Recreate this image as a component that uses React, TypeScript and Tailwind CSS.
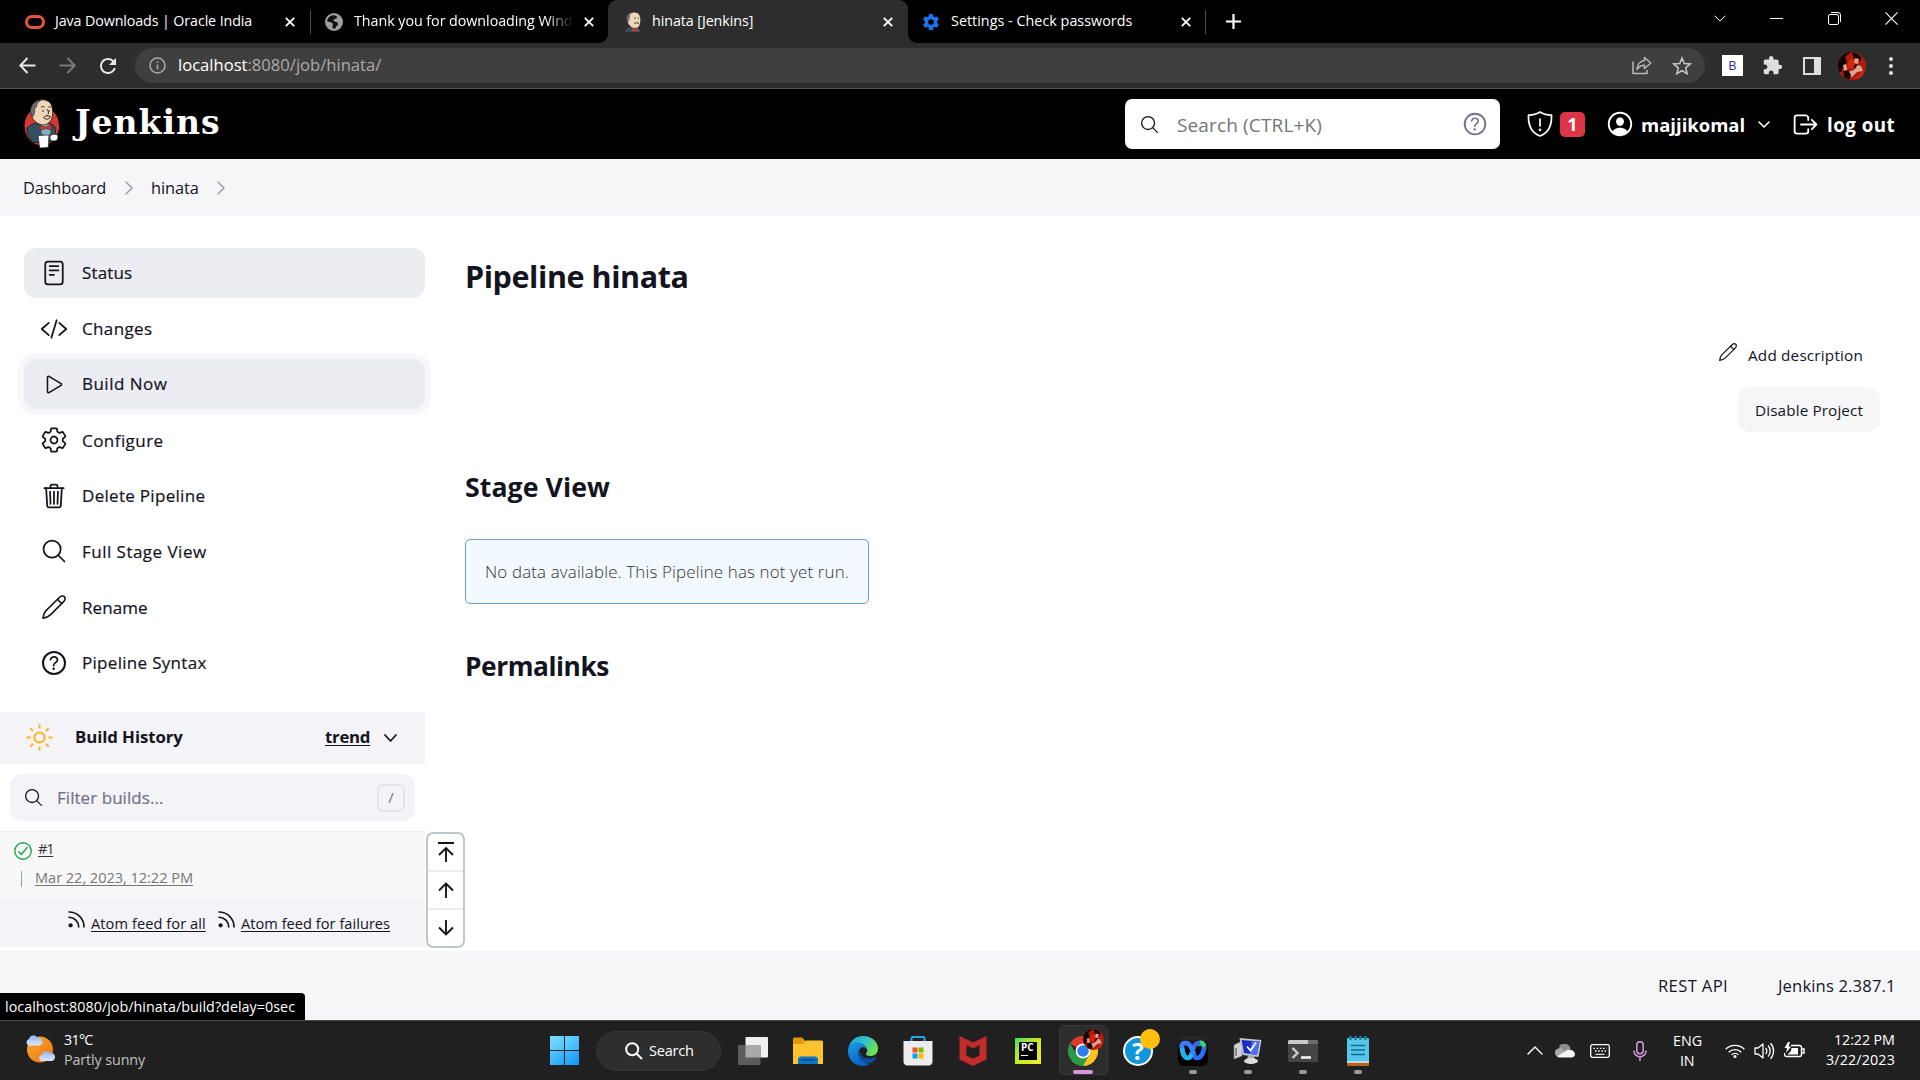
import React from "react";
import {
  IoReaderOutline, IoCodeSlashOutline, IoPlayOutline, IoSettingsOutline, IoTrashOutline, IoSearchOutline,
  IoHelpCircleOutline, IoPersonCircleOutline, IoLogOutOutline, IoCheckmarkCircleOutline, IoSettingsSharp,
} from "react-icons/io5";
import { MdExtension, MdRefresh } from "react-icons/md";

type TextProps = { className?: string; children: React.ReactNode };

function T({ className = "", children }: TextProps) {
  return <div className={`shrink-0 whitespace-nowrap ${className}`}>{children}</div>;
}

function Close() {
  return (
    <svg width="10" height="10" viewBox="0 0 10 10" className="shrink-0" stroke="#fff" strokeWidth="1.9">
      <path d="M.8.8l8.4 8.4M9.2.8L.8 9.2" />
    </svg>
  );
}

function Chevron({ className = "", d = "M1 1l5 5 5-5", w = 12, h = 7, sw = 1.6 }: { className?: string; d?: string; w?: number; h?: number; sw?: number }) {
  return (
    <svg width={w} height={h} viewBox={`0 0 ${w} ${h}`} className={`shrink-0 overflow-visible ${className}`} fill="none" stroke="currentColor" strokeWidth={sw} strokeLinecap="round" strokeLinejoin="round">
      <path d={d} />
    </svg>
  );
}

function Pencil({ className = "" }: { className?: string }) {
  return (
    <svg viewBox="0 0 24 24" className={`shrink-0 ${className}`} fill="none" stroke="currentColor" strokeWidth="1.6" strokeLinejoin="round" strokeLinecap="round">
      <path d="M.9 23.1C1.3 19.7 2 17.6 4 15.6L17.6 2.3C18.9 1 21.2.7 22.4 1.7 23.6 2.9 23.2 5.1 21.9 6.4L8.4 19.9C6.4 21.9 4.3 22.7.9 23.1Z" />
      <path d="M15.8 4.1C16.6 6.2 17.9 7.5 20 8.2" />
    </svg>
  );
}

function Rss({ className = "" }: { className?: string }) {
  return (
    <svg width="17" height="17" viewBox="0 0 17 17" className={`shrink-0 ${className}`} fill="none" stroke="currentColor" strokeWidth="1.6" strokeLinecap="round">
      <path d="M1 1C9.5 1 16 7.5 16 16M1 6.3C6.5 6.3 10.7 10.5 10.7 16" />
      <circle cx="2.6" cy="14.3" r="2.1" fill="currentColor" stroke="none" />
    </svg>
  );
}

function Butler() {
  return (
    <svg width="36" height="50" viewBox="0 0 36 50" className="shrink-0">
      <ellipse cx="17.8" cy="27" rx="17.3" ry="19.5" fill="#d33833" />
      <path d="M3 29c3-3 7-4.500 10-5.500l13 1c3 1 4.500 2 5 4l1 9-2 4-7 2H9c-4-4-6-8-6-14.500Z" fill="#335061" stroke="#111b22" strokeWidth=".8" />
      <path d="M16 26l10-1 .5 9-4 5-5-5Z" fill="#81b0c4" />
      <path d="M8.500 19C6 14 6.500 5.500 12 2.500 17 -.5 25 .5 27.500 6c1.300 4 1.300 8 .8 11.500-.8 4.500-3.800 7.500-8.300 8.500-4 0-9-2.500-11.500-7Z" fill="#f0d6b7" stroke="#111" strokeWidth=".7" />
      <path d="M7.500 17C5 11 7.500 3.500 14 1.500l3-.3c-3 1.800-4.500 4-4.500 7-2 .5-2.200 2-1.500 4l-1.500 5Z" fill="#6d6b6d" stroke="#231f20" strokeWidth=".5" />
      <path d="M17 8.500c1-1.300 2.500-1.300 3.500-.2M24.300 8.300c.8-1 1.800-1 2.600 0M18 12h2M24.500 12h1.500M23 10c1.300 2 2.300 4 .8 5.200M19.500 18.500c2-2 5-2.500 7-.8-1 2.800-5 3.300-7 .8Z" fill="none" stroke="#222" strokeWidth="1" />
      <path d="M16 26l5.500 2.300L27 25l.5 6-5.500-1.500-5.500 2Z" fill="#d33833" stroke="#5a1010" strokeWidth=".6" />
      <path d="M14 36.500l11-.5-.8 12.500-8.500.5Z" fill="#fff" stroke="#222" strokeWidth=".7" />
      <path d="M27 36c3-1.500 7-1 7 2s-2 4.500-5 4-4-4-2-6Z" fill="#fff" stroke="#222" strokeWidth=".8" />
    </svg>
  );
}

function Avatar({ className = "" }: { className?: string }) {
  return (
    <svg viewBox="0 0 28 28" className={`shrink-0 rounded-full ${className}`}>
      <rect width="28" height="28" fill="#b3190c" />
      <path d="M0 0h13L7 5l2 5-4 6-2 4H0Z" fill="#120404" />
      <path d="M14 0c6 1 10 4 9 8l-4 3-3-3Z" fill="#1d0605" />
      <path d="M10 9l5-3 3 4-4 7-4-2Z" fill="#d8260f" />
      <path d="M5 13l3-1 2 8 6-2 3-5 4 1 2 5-6 1-5 5-7-1Z" fill="#dba593" />
      <path d="M17 6l4 1-1 5-4-1Z" fill="#dba593" />
      <path d="M5 19l5-1 3 5-2 5-5-3ZM16 13l4-1-3 5Z" fill="#1b0606" />
      <path d="M16 27l9-8 3 9Z" fill="#d8260f" />
    </svg>
  );
}

function Tabs() {
  return (
    <div className="flex h-[43px] shrink-0 items-center bg-black text-[14.300px] text-white">
      <div className="flex h-full w-[310px] shrink-0 items-center pl-[25px]">
        <div className="h-[14px] w-5 rounded-[7px] border-[3px] border-[#e5533d]" />
        <T className="ml-[10px] w-[197px] pb-[2px] tracking-[-0.120px]">Java Downloads | Oracle India</T>
        <div className="ml-[33px]"><Close /></div>
      </div>
      <div className="h-6 w-px bg-[#4d4d4d]" />
      <div className="flex h-full w-[297px] shrink-0 items-center pl-[14px]">
        <svg width="18" height="18" viewBox="0 0 18 18" className="shrink-0">
          <circle cx="9" cy="9" r="9" fill="#9aa0a6" />
          <path d="M8 2.200c3 0 4 1 4 2.200 0 1.600-3.500 1-3.500 3 0 1.500 4.500.8 4.500 3.400 0 2-2 2-2.500 4.500-2 .9-3 .2-3-1.300 0-2 1-3-.5-4.200-1.500-1-4-.5-4.800-1.500C2.400 5 5 2.400 8 2.200Z" fill="#111" />
        </svg>
        <T className="ml-[11px] w-[219px] mask-r-from-88% pb-[2px] tracking-[-0.050px]">Thank you for downloading Wind</T>
        <div className="ml-[11px]"><Close /></div>
      </div>
      <div className="relative flex h-full w-[300px] shrink-0 items-center rounded-t-[9px] bg-[#2d2d2d] pl-4">
        <div className="absolute bottom-0 -left-[9px] size-[9px] bg-[#2d2d2d]"><div className="size-full rounded-br-[9px] bg-black" /></div>
        <div className="absolute -right-[9px] bottom-0 size-[9px] bg-[#2d2d2d]"><div className="size-full rounded-bl-[9px] bg-black" /></div>
        <svg width="18" height="20" viewBox="0 0 18 20" className="shrink-0">
          <path d="M1 20c0-3 2-4 5-4.500l8 .5c2 .5 2.500 2 2.500 4Z" fill="#335061" />
          <path d="M3.500 9C2.500 4 5 .5 10 .5S16.500 4 16.300 8.500 15 16 11 16 4.500 13 3.500 9Z" fill="#f0d6b7" />
          <path d="M3 9C1.500 4.500 4 1 8 .8 5.500 2.500 6 4.500 5.800 6L4.600 10Z" fill="#6d6b6d" />
          <path d="M10.500 6h1.500M14 6h1M10 11.500c1.500-1 4-1 5 0" stroke="#333" fill="none" />
          <path d="M8 16l3 1.500 3-1.500v4l-3-1.500L8 20Z" fill="#d33833" />
        </svg>
        <T className="ml-[10px] w-[101px] pb-[2px] tracking-[-0.080px]">hinata [Jenkins]</T>
        <div className="ml-[130px]"><Close /></div>
      </div>
      <div className="flex h-full w-[297px] shrink-0 items-center pl-[14px]">
        <IoSettingsSharp className="size-[18px] shrink-0 text-[#1a73e8]" />
        <T className="ml-[11px] w-[182px] pb-[2px] tracking-[0.040px]">Settings - Check passwords</T>
        <div className="ml-12"><Close /></div>
      </div>
      <div className="h-6 w-px bg-[#4d4d4d]" />
      <svg width="15" height="15" viewBox="0 0 15 15" className="ml-5 shrink-0" stroke="#fff" strokeWidth="2.200"><path d="M7.500 0v15M0 7.500h15" /></svg>
      <div className="mb-[6px] ml-auto flex items-center text-white">
        <div className="flex w-[57px] justify-center"><Chevron sw={1} /></div>
        <div className="flex w-[57px] justify-center"><div className="h-px w-[13px] bg-white" /></div>
        <div className="flex w-[58px] justify-center">
          <svg width="13" height="13" viewBox="0 0 13 13" fill="none" stroke="#fff"><rect x=".5" y="2.500" width="10" height="10" rx="1.500" /><path d="M3 .5h7a2.500 2.500 0 0 1 2.500 2.500v7" /></svg>
        </div>
        <div className="flex w-[57px] justify-center">
          <svg width="13" height="13" viewBox="0 0 14 14" stroke="#fff" strokeWidth="1.200"><path d="M.5.5l13 13M13.500.5l-13 13" /></svg>
        </div>
      </div>
    </div>
  );
}

function Toolbar() {
  return (
    <div className="flex h-[46px] shrink-0 items-center border-b border-[#565656] bg-[#2d2d2d] text-[#e8e8e8]">
      <svg width="17" height="17" viewBox="0 0 17 17" className="ml-[19px] shrink-0" fill="none" stroke="#e8e8e8" strokeWidth="1.900"><path d="M16.500 8.500H1.500M8.500 1L1.300 8.500l7.200 7.500" /></svg>
      <svg width="17" height="17" viewBox="0 0 17 17" className="ml-[23px] shrink-0" fill="none" stroke="#7b7b7b" strokeWidth="1.900"><path d="M.5 8.500h15M8.500 1l7.200 7.500L8.500 16" /></svg>
      <MdRefresh className="ml-5 size-6 shrink-0" />
      <div className="ml-[15px] flex h-[35px] w-[1570px] shrink-0 items-center rounded-full bg-[#3f3f3f]">
        <svg width="17" height="17" viewBox="0 0 17 17" className="ml-[14px] shrink-0" fill="none" stroke="#a8a8a8" strokeWidth="1.600"><circle cx="8.500" cy="8.500" r="7.500" /><path d="M8.500 7.500v5M8.500 4.300v1.800" /></svg>
        <T className="ml-3 w-[204px] text-[16.600px] text-[#ababab]"><span className="text-white">localhost</span>:8080/job/hinata/</T>
        <svg width="20" height="19" viewBox="0 0 20 19" className="ml-auto shrink-0" fill="none" stroke="#b9b9b9" strokeWidth="1.500" strokeLinejoin="round"><path d="M1 5.500v12h14V14M12.500 1.500L18.800 7l-6.300 5.500V9.300C9 9.300 7 10.500 5 13.500 5.300 9 8 5 12.500 4.600Z" /></svg>
        <svg width="20" height="19" viewBox="0 0 20 19" className="mr-[13px] ml-[20px] shrink-0" fill="none" stroke="#c4c4c4" strokeWidth="1.600"><path d="M10 2l2.300 5.500 6 .5-4.600 3.900 1.400 5.800L10 14.600l-5.100 3.100 1.400-5.800L1.700 8l6-.5Z" /></svg>
      </div>
      <div className="ml-[17px] flex size-[21px] shrink-0 items-center justify-center bg-white font-['Liberation_Sans',sans-serif] text-[12px] text-[#3f2bb8]">B</div>
      <MdExtension className="ml-[19px] size-[21px] shrink-0 text-[#dedede]" />
      <div className="ml-[20px] h-[18px] w-[18px] shrink-0 border-[2.500px] border-r-[7px] border-[#dedede]" />
      <Avatar className="ml-[17px] size-7" />
      <div className="ml-[23px] flex flex-col gap-[3px]">
        <div className="size-1 rounded-full bg-[#dedede]" /><div className="size-1 rounded-full bg-[#dedede]" /><div className="size-1 rounded-full bg-[#dedede]" />
      </div>
    </div>
  );
}

function Header() {
  return (
    <div className="flex h-[70px] shrink-0 items-center bg-black text-white">
      <div className="ml-6"><Butler /></div>
      <T className="ml-[15px] w-[146px] pb-[3px] font-['DejaVu_Serif',serif] text-[33px] leading-none font-bold tracking-[1px]">Jenkins</T>
      <div className="ml-auto flex h-[50px] w-[375px] shrink-0 items-center rounded-[7px] bg-white">
        <IoSearchOutline className="ml-[14px] size-[21px] shrink-0 text-[#14141f]" />
        <T className="ml-[17px] w-[145px] pt-[2px] text-[19px] tracking-[0.140px] text-[#757575]">Search (CTRL+K)</T>
        <IoHelpCircleOutline className="ml-[138px] size-[30px] shrink-0 text-[#73738c]" />
      </div>
      <svg width="26" height="26" viewBox="0 0 26 26" className="ml-[27px] shrink-0" fill="none" stroke="#fff" strokeWidth="1.700" strokeLinejoin="round" strokeLinecap="round"><path d="M13 1c3 2 7 3 11.500 3.200C25 15 21 22 13 25 5 22 1 15 1.500 4.200 6 4 10 3 13 1ZM13 8v7" /><circle cx="13" cy="18.800" r=".5" /></svg>
      <div className="ml-[7px] flex h-[25px] w-[25px] shrink-0 items-center justify-center rounded-[5px] bg-[#dc3545] text-[18px] font-bold">1</div>
      <IoPersonCircleOutline className="ml-[20px] size-[30px] shrink-0" />
      <T className="ml-[6px] w-[104px] pt-[2px] text-[18.500px] font-bold">majjikomal</T>
      <Chevron className="ml-[13px]" />
      <IoLogOutOutline className="ml-[21px] size-[29px] shrink-0" />
      <T className="mr-[25px] ml-[7px] w-[68px] pt-[2px] text-[18.800px] font-bold tracking-[0.450px]">log out</T>
    </div>
  );
}

function Breadcrumbs() {
  return (
    <div className="flex h-[57px] shrink-0 items-center bg-[#f6f6f8] text-[16.400px] text-[#14141f]">
      <T className="ml-[23px] w-[83px] pt-px tracking-[-0.150px]">Dashboard</T>
      <Chevron className="ml-5 text-[#a0a0b0]" w={7} h={14} d="M0 1l6 6-6 6" />
      <T className="ml-[18px] w-[47px] pt-px tracking-[-0.100px]">hinata</T>
      <Chevron className="ml-5 text-[#a0a0b0]" w={7} h={14} d="M0 1l6 6-6 6" />
    </div>
  );
}

const itemBase = "flex h-[49.700px] shrink-0 items-center rounded-[12px] pl-[16px] text-[#14141f]";
const itemOn = "bg-[#ecedf3]";
const itemHover = "bg-[#ecedf3] ring-[6px] ring-[#f7f7fa]";

function Sidebar() {
  return (
    <div className="flex w-[425px] shrink-0 flex-col">
      <nav className="flex h-[496px] shrink-0 flex-col gap-[6px] pt-8 pl-6 text-[17px] [-webkit-text-stroke:0.200px]">
        <div className={`${itemBase} ${itemOn}`}><IoReaderOutline className="size-[28px]" /><T className="ml-[14px] w-[51px] tracking-[0.150px]">Status</T></div>
        <div className={itemBase}><IoCodeSlashOutline className="size-[28px]" /><T className="ml-[14px] w-[71px] tracking-[0.350px]">Changes</T></div>
        <div className={`${itemBase} ${itemHover}`}><IoPlayOutline className="mx-[1.500px] size-[25px]" /><T className="ml-[14px] w-[86px] tracking-[0.480px]">Build Now</T></div>
        <div className={itemBase}><IoSettingsOutline className="size-[28px]" /><T className="ml-[14px] w-[82px] pt-px tracking-[0.450px]">Configure</T></div>
        <div className={itemBase}><IoTrashOutline className="size-[28px]" /><T className="ml-[14px] w-[123px] tracking-[0.300px]">Delete Pipeline</T></div>
        <div className={itemBase}><IoSearchOutline className="size-[28px]" /><T className="ml-[14px] w-[125px] tracking-[0.480px]">Full Stage View</T></div>
        <div className={itemBase}><Pencil className="mx-[2px] size-6" /><T className="ml-[14px] w-[66px] pt-px tracking-[0.080px]">Rename</T></div>
        <div className={itemBase}><IoHelpCircleOutline className="-mx-[2px] size-[32px]" /><T className="ml-[14px] w-[125px] pt-px tracking-[0.300px]">Pipeline Syntax</T></div>
      </nav>
      <div className="flex h-[52px] shrink-0 items-center bg-[#f3f3f8] text-[16.800px] font-bold text-[#14141f]">
        <svg width="27" height="27" viewBox="-13.500 -13.500 27 27" className="mb-px ml-[26px] shrink-0" fill="none" stroke="#ffb31a" strokeWidth="2">
          <circle r="5" />
          <path d="M0-13v4M0 13V9M-13 0h4M13 0H9M-9.200-9.200l2.800 2.800M9.200-9.200L6.400-6.400M-9.200 9.200l2.800-2.800M9.200 9.200L6.400 6.400" />
        </svg>
        <T className="ml-[22px] w-[108px] pb-[2px] tracking-[-0.070px]">Build History</T>
        <T className="ml-[142px] w-[45px] pb-[2px] tracking-[-0.250px] underline underline-offset-2">trend</T>
        <Chevron className="ml-[14px]" w={13} h={7} d="M1 0l5.500 6L12 0" sw={1.8} />
      </div>
      <div className="mt-[10px] ml-[10px] flex h-[47px] w-[405px] shrink-0 items-center rounded-[12px] bg-[#f3f3f8]">
        <IoSearchOutline className="ml-[13px] size-[21px] shrink-0 text-[#14141f]" />
        <T className="ml-[13px] w-[106px] pt-px text-[17px] tracking-[0.050px] text-[#73738c] [-webkit-text-stroke:0.200px]">Filter builds...</T>
        <div className="mr-[10px] ml-auto flex size-7 items-center justify-center rounded-[6px] border-2 border-[#e3e3ee] text-[15px] text-[#73738c]">/</div>
      </div>
      <div className="mt-[10px] h-[68px] shrink-0 border-t border-[#ededed] bg-[#f8f8f8] text-[14.600px]">
        <div className="mt-[6px] flex h-6 items-center">
          <IoCheckmarkCircleOutline className="mt-[2px] ml-3 size-[22px] shrink-0 text-[#1ea64b]" />
          <T className="ml-[4px] w-[15px] pb-[3px] tracking-[-1.300px] text-[#333] underline underline-offset-2">#1</T>
        </div>
        <div className="mt-[5px] flex h-6 items-center">
          <div className="ml-[21px] h-4 w-px bg-[#8fa0a8]" />
          <T className="ml-[13px] w-[158px] pb-[2px] tracking-[-0.050px] text-[#777] underline underline-offset-2">Mar 22, 2023, 12:22 PM</T>
        </div>
      </div>
      <div className="flex h-12 shrink-0 items-center bg-[#f3f3f8] text-[14.600px] text-[#14141f]">
        <Rss className="mb-2 ml-[68px]" />
        <T className="ml-[6px] w-[115px] pt-[2px] tracking-[0.080px] underline underline-offset-2">Atom feed for all</T>
        <Rss className="mb-2 ml-3" />
        <T className="ml-[6px] w-[149px] pt-[2px] tracking-[0.030px] underline underline-offset-2">Atom feed for failures</T>
      </div>
    </div>
  );
}

function PageNav() {
  return (
    <div className="mt-auto mb-[3px] ml-px flex h-[116px] w-[39px] shrink-0 flex-col rounded-[7px] border-2 border-[#bcc7cb] bg-white text-[#14141f]">
      <div className="flex flex-1 items-center justify-center border-b-2 border-[#ececf0]">
        <svg width="16" height="20" viewBox="0 0 16 20" fill="none" stroke="currentColor" strokeWidth="1.900"><path d="M0 1h16M8 20V7M1 13l7-7 7 7" /></svg>
      </div>
      <div className="flex flex-1 items-center justify-center border-b-2 border-[#ececf0]">
        <svg width="16" height="16" viewBox="0 0 16 16" fill="none" stroke="currentColor" strokeWidth="1.900"><path d="M8 16V2M1 8.500l7-7 7 7" /></svg>
      </div>
      <div className="flex flex-1 items-center justify-center">
        <svg width="16" height="16" viewBox="0 0 16 16" fill="none" stroke="currentColor" strokeWidth="1.900"><path d="M8 0v14M1 7.500l7 7 7-7" /></svg>
      </div>
    </div>
  );
}

function Main() {
  return (
    <div className="flex flex-1 flex-col text-[#14141f]">
      <div className="mt-10 flex h-10 items-center"><T className="w-[223px] pt-[2px] text-[30.500px] font-bold tracking-[-0.420px]">Pipeline hinata</T></div>
      <div className="mt-10 flex h-10 items-center justify-end pr-[57px]">
        <Pencil className="mr-[11px] mb-[8px] size-[18px]" />
        <T className="w-[115px] pb-[2px] text-[15.300px] tracking-[0.180px]">Add description</T>
      </div>
      <div className="mt-[11px] mr-10 flex h-[45px] w-[142px] items-center justify-center self-end rounded-[12px] bg-[#f6f6f9]">
        <T className="w-[108px] pt-px text-[15.300px] tracking-[0.110px]">Disable Project</T>
      </div>
      <div className="mt-[34px] flex h-10 items-center"><T className="w-[144px] pt-[2px] text-[26.700px] font-bold tracking-[0.070px]">Stage View</T></div>
      <div className="mt-[33px] flex h-[65px] w-[404px] items-center rounded-[5px] border border-[#6b9bd0] bg-[#f1f9ff] pl-[19px]">
        <T className="w-[364px] text-[16.900px] font-light tracking-[0.160px] text-[#333]">No data available. This Pipeline has not yet run.</T>
      </div>
      <div className="mt-[42px] flex h-10 items-center"><T className="w-[143px] pt-[2px] text-[26.300px] font-bold tracking-[-0.450px]">Permalinks</T></div>
    </div>
  );
}

function Footer() {
  return (
    <div className="relative flex h-[69px] shrink-0 items-center bg-[#f6f6f8] pt-[2px] text-[16.600px] text-[#14141f]">
      <T className="ml-[1658px] w-[71px] tracking-[0.360px]">REST API</T>
      <T className="ml-[49px] w-[117px] tracking-[0.150px]">Jenkins 2.387.1</T>
      <div className="absolute bottom-0 left-0 flex h-[27px] w-[305px] items-center rounded-tr-[4px] bg-black pl-[5px] text-[14.300px] text-white">
        <T className="w-[290px] tracking-[0.040px]">localhost:8080/job/hinata/build?delay=0sec</T>
      </div>
    </div>
  );
}

const app = "relative flex h-full w-[55px] shrink-0 items-center justify-center";

function Running() {
  return <div className="absolute bottom-[6px] left-[23px] h-1 w-2 rounded-full bg-[#9a9a9a]" />;
}

function Taskbar() {
  return (
    <div className="flex h-[60px] shrink-0 items-center border-t border-[#4a4a4a] bg-[#202020] text-[14.300px] text-white">
      <svg width="31" height="29" viewBox="0 0 31 29" className="mb-[4px] ml-[25px] shrink-0">
        <defs>
          <linearGradient id="sun" x1="0" y1="0" x2="1" y2="1"><stop stopColor="#fbb034" /><stop offset="1" stopColor="#ee6c0c" /></linearGradient>
          <linearGradient id="cld" x1="0" y1="0" x2="0" y2="1"><stop stopColor="#8fb2ee" /><stop offset="1" stopColor="#dce8fb" /></linearGradient>
        </defs>
        <circle cx="15" cy="15.500" r="13" fill="url(#sun)" />
        <path d="M3.500 11.500a3.500 3.500 0 0 1 .5-6.500A4.500 4.500 0 0 1 12.500 4 3.800 3.800 0 0 1 14.500 11.500Z" fill="url(#cld)" />
        <path d="M16 27a3.300 3.300 0 0 1 .6-6.200 4.600 4.600 0 0 1 8.300-1.800A4 4 0 0 1 27 27Z" fill="url(#cld)" />
      </svg>
      <div className="mb-[2px] ml-[8px] flex w-[486px] shrink-0 flex-col">
        <T className="h-5 w-[29px] leading-5 tracking-[-0.700px]">31°C</T>
        <T className="h-5 w-[81px] leading-5 tracking-[-0.100px] text-[#c0c0c0]">Partly sunny</T>
      </div>
      <div className="grid size-[29px] shrink-0 grid-cols-2 gap-px">
        <div className="bg-linear-to-br from-[#7fdcff] to-[#49c3fb]" /><div className="bg-linear-to-br from-[#68d6ff] to-[#34b3fa]" />
        <div className="bg-linear-to-br from-[#54cafd] to-[#1ea2fa]" /><div className="bg-linear-to-br from-[#3fbbfb] to-[#0a93fb]" />
      </div>
      <div className="ml-[17px] flex h-10 w-[125px] shrink-0 items-center rounded-full border border-[#353535] bg-[#2e2e2e]">
        <svg width="18" height="18" viewBox="0 0 18 18" className="ml-7 shrink-0" fill="none" stroke="#fff" strokeWidth="2"><circle cx="7.200" cy="7.200" r="6" /><path d="M11.500 11.500l5.500 5.500" /></svg>
        <T className="ml-[6px] w-[45px] text-[14.600px] tracking-[-0.250px]">Search</T>
      </div>
      <div className="ml-[4.500px] flex h-full shrink-0">
        <div className={app}>
          <svg width="30" height="28" viewBox="0 0 30 28"><rect x="7.500" width="22.500" height="20.500" rx="1" fill="#efefef" /><rect y="8" width="22.500" height="20" rx="1" fill="#5c5c5c" /><path d="M7.500 8h15v12.500h-15Z" fill="#a9a9a9" /></svg>
        </div>
        <div className={app}>
          <svg width="30" height="27" viewBox="0 0 30 27"><path d="M0 2a1.500 1.500 0 0 1 1.500-1.500h7.500L12.500 4v6H0Z" fill="#e09b0a" /><path d="M0 7l10 0 3-3.500h15.500A1.500 1.500 0 0 1 30 5v22H0Z" fill="#fdc32f" /><path d="M5 27v-5a3 3 0 0 1 3-2.500h14a3 3 0 0 1 3 2.500v5Z" fill="#1173c6" /><path d="M8.500 23h13" stroke="#0a4c8d" strokeWidth="1.500" /></svg>
        </div>
        <div className={app}>
          <svg width="30" height="30" viewBox="0 0 30 30">
            <defs>
              <linearGradient id="eg" x1="0" y1="0" x2="1" y2=".4"><stop stopColor="#1fa2e0" /><stop offset=".6" stopColor="#35c1c9" /><stop offset="1" stopColor="#6fe04d" /></linearGradient>
              <linearGradient id="eb" x1="0" y1="0" x2=".4" y2="1"><stop stopColor="#1a9be6" /><stop offset="1" stopColor="#0a63c4" /></linearGradient>
            </defs>
            <path d="M.5 12C2 4.500 8 0 15 0c9 0 15 6 15 12.500 0 5-3.500 7.500-7.500 7.500-3.500 0-5-1.200-4.500-2.200.6-.9 1.200-1.600 1.200-3C19 10 14 7 9 7S1.500 9.500.5 12Z" fill="url(#eg)" />
            <path d="M0 15c0-5.500 4-8.500 8.500-8.500 5 0 9 2.500 10 6-1-1-2.500-1.500-4-1.300-3 .6-4.500 4-4 7C11.500 24 17 28 22 27.500 19.500 29.500 17 30 15 30 6 30 0 23.500 0 15Z" fill="url(#eb)" />
            <path d="M10.400 16c-.8 7 5.600 11.500 12.100 11.200C25 26 27 24 28 22c.3-.8-.2-1.200-1-.8-8 3.300-14.500-.2-15-5.200Z" fill="#0c4d9c" />
          </svg>
        </div>
        <div className={app}>
          <svg width="30" height="30" viewBox="0 0 30 30"><path d="M8.500 6V2.500A1.500 1.500 0 0 1 10 1h10a1.500 1.500 0 0 1 1.500 1.500V6" fill="none" stroke="#1fa9e8" strokeWidth="2" /><path d="M.5 5h29v20a4 4 0 0 1-4 4.500h-21a4 4 0 0 1-4-4.500Z" fill="#ececec" /><path d="M9.500 11.500h5v5h-5Z" fill="#f25022" /><path d="M15.500 11.500h5v5h-5Z" fill="#7fba00" /><path d="M9.500 17.500h5v5h-5Z" fill="#00a4ef" /><path d="M15.500 17.500h5v5h-5Z" fill="#ffb900" /></svg>
        </div>
        <div className={app}>
          <svg width="28" height="30" viewBox="0 0 28 30"><path d="M.5 0L14 6.500 27.500 0v23.500L14 30 .5 23.500ZM7.500 9v10.500l6.500 3.300 6.500-3.300V9L14 12.500Z" fill="#c22d2b" fillRule="evenodd" /></svg>
        </div>
        <div className={app}>
          <div className="flex size-[26px] bg-linear-to-br from-[#1fe05a] via-[#c9ea20] to-[#f3ee2c] p-[4px]">
            <div className="flex size-[18px] flex-col bg-black pl-[2px] text-[10px] leading-[11px] font-bold text-white">PC<div className="mt-[2px] h-px w-[7px] bg-white" /></div>
          </div>
        </div>
        <div className={app}>
          <div className="absolute top-[4px] left-[3px] h-[50px] w-[49px] rounded-[5px] border border-[#383838] bg-[#2d2d2d]" />
          <svg width="30" height="30" viewBox="0 0 30 30" className="relative">
            <path d="M15 15L2 7.500A15 15 0 0 1 28 7.500H15Z" fill="#e0382b" />
            <path d="M15 15V7.500h13A15 15 0 0 1 15 30Z" fill="#fcc31e" />
            <path d="M2 7.500L8.500 18.800 21.500 18.800 15 30A15 15 0 0 1 2 7.500Z" fill="#2b9a45" />
            <circle cx="15" cy="15" r="7.500" fill="#fff" /><circle cx="15" cy="15" r="5.800" fill="#2f7cee" />
          </svg>
          <Avatar className="absolute top-[8px] left-[27px] size-[21px]" />
          <div className="absolute bottom-[6px] left-[17.500px] h-1 w-5 rounded-full bg-[#d896e0]" />
        </div>
        <div className={app}>
          <div className="flex size-[30px] items-center justify-center rounded-full border-2 border-white bg-[#1296db] text-[24px] leading-none font-bold">?</div>
          <div className="absolute top-[8px] left-[29px] size-5 rounded-full bg-[#ffbf0f]" />
        </div>
        <div className={app}>
          <div className="flex size-[30px] items-center justify-center rounded-[6px] bg-linear-to-b from-[#2b2b2b] to-black">
            <svg width="28" height="21" viewBox="0 0 28 21" fill="none" strokeWidth="4.600" strokeLinecap="round">
              <path d="M20 3.300C23.500 2 25.700 4.500 25 8.500S22 18 18.500 18 14.500 13.500 13.700 10" stroke="#2b6bff" />
              <path d="M19.500 3.300c2.200-.8 4-.2 5 1.700" stroke="#39d36c" />
              <path d="M2.800 6C3 12 5 18 8.800 18S12.600 13.500 13.700 10 16.500 3.500 19 3.300" stroke="#3566f5" />
              <path d="M3 8C3.600 13 5.500 18 8.800 18c2 0 3-1.500 3.700-3.500" stroke="#1fb6e8" />
              <path d="M2.800 6.500C2.800 3 6.500 2 9.500 4c2.700 2 3.700 5.500 4.700 8.500" stroke="#3a7dff" />
            </svg>
          </div>
          <Running />
        </div>
        <div className={app}>
          <svg width="30" height="28" viewBox="0 0 30 28">
            <path d="M1 8l8-4v15l-8 3Z" fill="#cfd3d6" stroke="#7c8286" strokeWidth=".6" /><path d="M3 11v8" stroke="#55595c" strokeWidth="1.200" />
            <path d="M6.500 1l22 2-3 17-16-2Z" fill="#c3c7cb" /><path d="M8.500 3l18 1.500-2.500 13.500L11 16Z" fill="#1a2fc2" /><path d="M19 4l7.500.5-2.500 13.500-7-1Z" fill="#4f6fee" />
            <path d="M14 9.500l3.500 4L23 5.500" fill="none" stroke="#fff" strokeWidth="1.700" />
            <path d="M15 18.500h6l1 4h-8Z" fill="#b0b0b0" /><ellipse cx="18" cy="24" rx="7" ry="3" fill="#dedede" />
          </svg>
          <Running />
        </div>
        <div className={app}>
          <svg width="30" height="22" viewBox="0 0 30 22"><rect width="30" height="22" rx="1.500" fill="#454545" /><path d="M0 4V1.500A1.500 1.500 0 0 1 1.500 0H20v4Z" fill="#c8c8c8" /><path d="M20 0h8.500A1.500 1.500 0 0 1 30 1.500V4H20Z" fill="#6e6e6e" /><path d="M4.500 8l5 5-5 5" fill="none" stroke="#ccc" strokeWidth="2.400" /><path d="M13 17.500h10" stroke="#f2f2f2" strokeWidth="2.600" /></svg>
          <Running />
        </div>
        <div className={app}>
          <svg width="22" height="30" viewBox="0 0 22 30"><rect y="2" width="22" height="26" rx="1" fill="#54c7ea" /><path d="M0 26h22v3a1 1 0 0 1-1 1H1a1 1 0 0 1-1-1Z" fill="#b5651d" /><path d="M0 25.500h22v1.200H0Z" fill="#fff" /><path d="M4 9.500h14M4 14h14M4 18.500h14" stroke="#0f6c8f" strokeWidth="1.600" /><path d="M3.500 0v4M8.500 0v4M13.500 0v4M18.500 0v4" stroke="#1b7f9f" strokeWidth="2.400" /></svg>
          <Running />
        </div>
      </div>
      <div className="ml-auto flex items-center pr-[25px]">
        <Chevron w={16} h={9} d="M1 8l7-7 7 7" sw={1.4} />
        <svg width="20" height="14" viewBox="0 0 20 14" className="ml-3"><path d="M0 9a4 4 0 0 1 4-4.500A6.300 6.300 0 0 1 15.500 4.500L4 13Q0 12 0 9Z" fill="#a9a9a9" /><path d="M4 2.500A6.300 6.300 0 0 1 15.500 4.500C13 5 11 6 9.500 7Z" fill="#8d8d8d" /><path d="M2 12.500L12.500 6c2-1 7 0 7.500 4 0 2-1.500 3.500-3.500 3.500H4Z" fill="#f5f5f5" /></svg>
        <svg width="20" height="14" viewBox="0 0 20 14" className="ml-[15px]" fill="none" stroke="#fff" strokeWidth="1.300"><rect x=".7" y=".7" width="18.600" height="12.600" rx="1.800" /><path d="M3.500 4.300h13" strokeDasharray="1.500 1.700" /><path d="M5 7h11" strokeDasharray="1.500 1.700" /><path d="M5.500 10.300h9" strokeWidth="1.100" /></svg>
        <svg width="14" height="20" viewBox="0 0 14 20" className="ml-[23px]" fill="none" stroke="#d69be0" strokeWidth="1.500"><rect x="3.800" y=".8" width="6.400" height="12" rx="3.200" /><path d="M.8 9.500a6.200 6.200 0 0 0 12.400 0M7 15.700V20" /></svg>
        <div className="ml-[26px] flex w-[29px] flex-col items-center">
          <T className="h-5 w-[29px] leading-5">ENG</T>
          <T className="h-5 w-[15px] leading-5 tracking-[-0.200px]">IN</T>
        </div>
        <svg width="20" height="16" viewBox="0 0 21 16" className="ml-[23px]" fill="none" stroke="#fff" strokeWidth="1.500"><path d="M.7 6.200a13.800 13.800 0 0 1 19.600 0M3.900 9.300a9.300 9.300 0 0 1 13.200 0M6.900 12a5.100 5.100 0 0 1 7.200 0" /><circle cx="10.500" cy="13.800" r="1.600" fill="#fff" stroke="none" /></svg>
        <svg width="21" height="18" viewBox="0 0 21 18" className="ml-[9px]" fill="none" stroke="#fff" strokeWidth="1.300" strokeLinejoin="round"><path d="M1 6h3l5-4v14l-5-4H1ZM11.500 6a4 4 0 0 1 0 6M14 3.500a8 8 0 0 1 0 11M16.500 1.200a11.500 11.500 0 0 1 0 15.600" /></svg>
        <svg width="21" height="17" viewBox="0 0 21 17" className="ml-[9px]" fill="none" stroke="#fff" strokeWidth="1.400"><path d="M7 3.500h8.500a2 2 0 0 1 2 2v7a2 2 0 0 1-2 2h-13a2 2 0 0 1-2-2V11M18 7h2v4h-2" /><path d="M7.500 6H14v6.500H3.500L7 9Z" fill="#fff" stroke="none" /><path d="M4 0L.5 6h2.700L2 11l5-6.500H4.500L6 0Z" fill="#fff" stroke="none" /></svg>
        <div className="mb-[2px] ml-[20px] flex w-[70px] flex-col items-end">
          <T className="h-5 w-[61px] leading-5 tracking-[-0.100px]">12:22 PM</T>
          <T className="h-5 w-[69px] leading-5 tracking-[0.140px]">3/22/2023</T>
        </div>
      </div>
    </div>
  );
}

export default function App() {
  return (
    <div className="flex h-[1080px] w-[1920px] flex-col overflow-hidden bg-white font-['Open_Sans',sans-serif]">
      <Tabs />
      <Toolbar />
      <Header />
      <Breadcrumbs />
      <div className="flex h-[735px] shrink-0">
        <Sidebar />
        <PageNav />
        <Main />
      </div>
      <Footer />
      <Taskbar />
    </div>
  );
}
